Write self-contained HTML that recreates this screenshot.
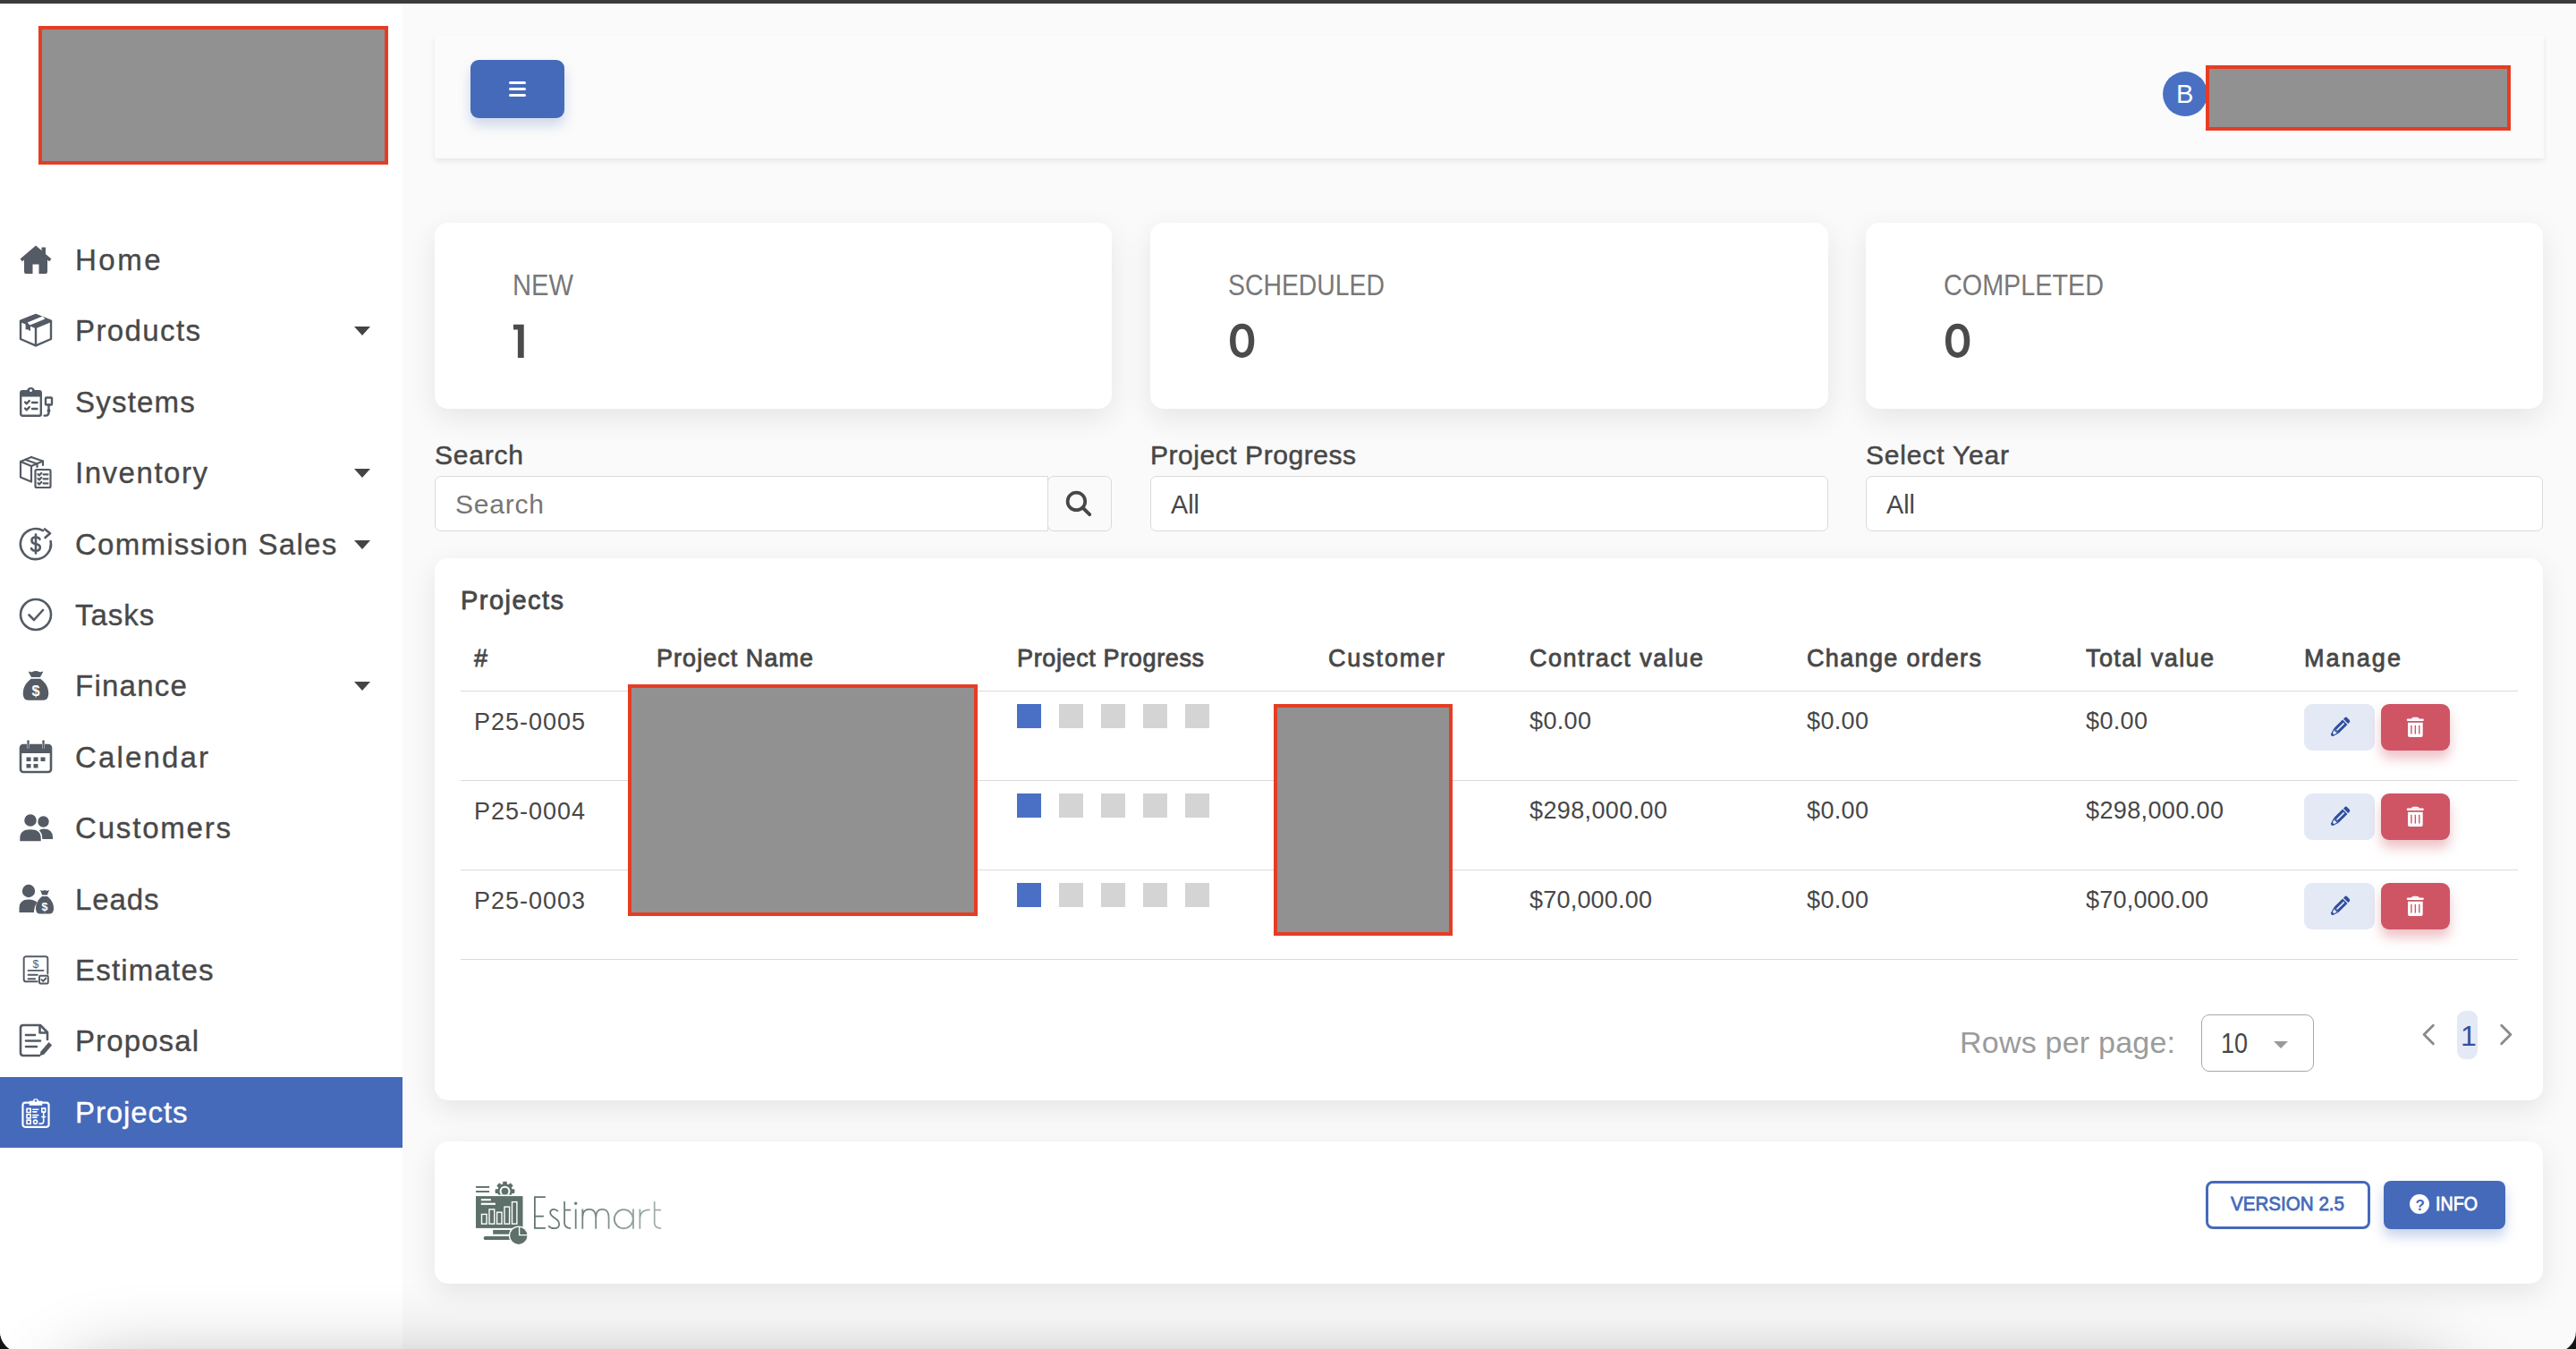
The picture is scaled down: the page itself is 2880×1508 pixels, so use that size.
<!DOCTYPE html>
<html lang="en">
<head>
<meta charset="utf-8">
<title>Projects</title>
<style>
*{box-sizing:border-box;margin:0;padding:0}
html,body{width:2880px;height:1508px;overflow:hidden;background:#161412}
body{font-family:"Liberation Sans",sans-serif;color:#474747;position:relative}
#win{position:absolute;left:0;top:0;width:2880px;height:1512px;background:#fafafa;border-radius:0 0 24px 24px;overflow:hidden}
#topbar{position:absolute;left:0;top:0;width:2880px;height:4px;background:#3b3b3b;z-index:50}
.abs{position:absolute}
.t{position:absolute;white-space:nowrap;line-height:1;transform-origin:left top}
.redact{position:absolute;background:#919191;border:4px solid #e53d24}
/* sidebar */
#side{position:absolute;left:0;top:0;width:450px;height:1512px;background:#fff;z-index:5}
.nav{position:absolute;left:0;width:450px;height:79px}
.nav .lbl{position:absolute;left:84px;top:21px;font-size:33px;line-height:38px;letter-spacing:1.1px;color:#484848;white-space:nowrap;-webkit-text-stroke:.35px currentColor}
.nav svg.ic{position:absolute;left:20px;top:19px;width:40px;height:40px}
.nav .caret{position:absolute;left:396px;top:35px;width:0;height:0;border-left:9px solid transparent;border-right:9px solid transparent;border-top:10px solid #444}
.nav.act{background:#466aba}
.nav.act .lbl{color:#fff}
.t.b{font-weight:700}
.t.sb{-webkit-text-stroke:.8px currentColor}
.t.m{-webkit-text-stroke:.5px currentColor}
.inp{background:#fff;border:1px solid #dadada}
/* cards */
.card{position:absolute;background:#fff;border-radius:15px;box-shadow:0 10px 32px rgba(0,0,0,.085)}
</style>
</head>
<body>
<div id="win">
<div id="topbar"></div>

<!-- SIDEBAR -->
<div id="side">
  <div class="redact" style="left:43px;top:29px;width:391px;height:155px"></div>
  <!--NAV-->
  <div class="nav" style="top:251.0px"><svg class="ic" viewBox="0 0 40 40"><path fill="#545b65" d="M20 4.5 L2.5 19.5 L5 22.3 L7 20.6 V34 Q7 36 9 36 H16.5 V25.5 H23.5 V36 H31 Q33 36 33 34 V20.6 L35 22.3 L37.5 19.5 L31 14 V6.5 H26.5 V10.1 Z"/></svg><div class="lbl" id="n0" style="letter-spacing:2.52px">Home</div></div>
  <div class="nav" style="top:330.4px"><svg class="ic" viewBox="0 0 40 40"><g fill="none" stroke="#545b65" stroke-width="2.4" stroke-linejoin="round" stroke-linecap="round"><path d="M20 3 L37 9.8 V30 L20 37.4 L3 30 V9.8 Z"/><path d="M20 17 V37"/></g><path fill="#545b65" stroke="#545b65" stroke-width="2.4" stroke-linejoin="round" d="M20 3 L37 9.8 L20 17 L3 9.8 Z"/><path fill="#fff" d="M10.6 11.4 L27.6 4.6 L30.4 7.6 L13.4 14.6 Z"/><path fill="#545b65" d="M8.6 12.4 L14 14.7 V21.2 L11.6 19.4 L8.6 19.2 Z"/></svg><div class="lbl" id="n1" style="letter-spacing:1.40px">Products</div><div class=caret></div></div>
  <div class="nav" style="top:409.8px"><svg class="ic" viewBox="0 0 40 40"><g fill="none" stroke="#545b65" stroke-width="2.4" stroke-linejoin="round" stroke-linecap="round"><rect x="3.2" y="8.2" width="22.6" height="27.6" rx="2"/><path d="M8 20.5 l1.8 1.8 l3-3.2"/><path d="M16 21 H21.5"/><path d="M8 27.5 l1.8 1.8 l3-3.2"/><path d="M16 28 H21.5"/><rect x="31" y="15.5" width="7" height="8" rx=".8"/><path d="M34.5 23.5 V32 Q34.5 35.6 31 35.6 H29.5"/></g><path fill="#545b65" d="M3.2 10 Q3.2 8.2 5.2 8.2 H10 Q10.6 4 14.5 4 Q18.4 4 19 8.2 H23.8 Q25.8 8.2 25.8 10 V14.6 H3.2 Z"/><circle cx="14.5" cy="7.4" r="1.5" fill="#fff"/><circle cx="34.5" cy="30" r="2" fill="#545b65"/></svg><div class="lbl" id="n2" style="letter-spacing:1.21px">Systems</div></div>
  <div class="nav" style="top:489.2px"><svg class="ic" viewBox="0 0 40 40"><g fill="none" stroke="#545b65" stroke-width="2.2" stroke-linejoin="round" stroke-linecap="round"><path d="M15 3 L28 7.5 V12"/><path d="M15 3 L3 8 V25.5 L15 30.5 V13 L3 8"/><path d="M15 13 L28 7.5"/><path d="M8 5.8 L21.5 10.5 V14"/><rect x="19.5" y="17" width="17" height="20" rx="1.5"/><path d="M22.5 22 l1.4 1.4 l2.4-2.6"/><path d="M28.5 22.3 H33.5"/><path d="M22.5 27 l1.4 1.4 l2.4-2.6"/><path d="M28.5 27.3 H33.5"/><path d="M22.5 32 l1.4 1.4 l2.4-2.6"/><path d="M28.5 32.3 H33.5"/></g></svg><div class="lbl" id="n3" style="letter-spacing:1.53px">Inventory</div><div class=caret></div></div>
  <div class="nav" style="top:568.6px"><svg class="ic" viewBox="0 0 40 40"><g fill="none" stroke="#545b65" stroke-width="2.6" stroke-linecap="round" stroke-linejoin="round"><path d="M36.6 17 A17 17 0 1 1 28 5.2"/><path d="M36.5 24 A17 17 0 0 0 37 21" /><path d="M30 3.5 L36 8.2 L30.5 13" /><path d="M24.5 14.8 Q23.5 12.5 20 12.5 Q15.5 12.5 15.5 16.2 Q15.5 19.3 20 20 Q24.8 20.8 24.8 24 Q24.8 27.7 20 27.7 Q16 27.7 15 25"/><path d="M20 9.5 V30.5"/></g></svg><div class="lbl" id="n4" style="letter-spacing:1.26px">Commission Sales</div><div class=caret></div></div>
  <div class="nav" style="top:648.0px"><svg class="ic" viewBox="0 0 40 40"><g fill="none" stroke="#545b65" stroke-width="2.6" stroke-linecap="round" stroke-linejoin="round"><circle cx="20" cy="20" r="17"/><path d="M12.5 20.5 L18 26 L28 15"/></g></svg><div class="lbl" id="n5" style="letter-spacing:0.96px">Tasks</div></div>
  <div class="nav" style="top:727.4px"><svg class="ic" viewBox="-1 -1.5 42 42"><path fill="#545b65" d="M13 3.5 Q14.5 4.6 16 3.8 Q18 2.6 20 2.6 Q22 2.6 24 3.8 Q25.5 4.6 27 3.5 Q28.6 2.6 28.2 4.6 L25.2 10 H14.8 L11.8 4.6 Q11.4 2.6 13 3.5 Z M14.5 11.8 H25.5 Q35 19 35 29 Q35 37 29 37 H11 Q5 37 5 29 Q5 19 14.5 11.8 Z"/><text x="20" y="32" font-family="Liberation Sans" font-weight="700" font-size="17" text-anchor="middle" fill="#fff">$</text></svg><div class="lbl" id="n6" style="letter-spacing:1.25px">Finance</div><div class=caret></div></div>
  <div class="nav" style="top:806.8px"><svg class="ic" viewBox="0 0 40 40"><g fill="none" stroke="#545b65" stroke-width="2.6" stroke-linejoin="round" stroke-linecap="round"><rect x="3" y="7" width="34" height="30" rx="3"/><path d="M11.5 3 V10"/><path d="M28.5 3 V10"/></g><path fill="#545b65" d="M3 9 Q3 7 6 7 H34 Q37 7 37 9 V16 H3 Z"/><path fill="#fff" d="M10 3 h3 v7.5 h-3z M27 3 h3 v7.5 h-3z"/><g fill="none" stroke="#545b65" stroke-width="2.2" stroke-linecap="round"><path d="M11.5 2.5 V10"/><path d="M28.5 2.5 V10"/></g><g fill="#545b65"><rect x="9.5" y="20.5" width="5" height="4.5"/><rect x="17.5" y="20.5" width="5" height="4.5"/><rect x="25.5" y="20.5" width="5" height="4.5"/><rect x="9.5" y="28" width="5" height="4.5"/><rect x="17.5" y="28" width="5" height="4.5"/></g></svg><div class="lbl" id="n7" style="letter-spacing:2.14px">Calendar</div></div>
  <div class="nav" style="top:886.2px"><svg class="ic" viewBox="0 0 40 40"><g fill="#545b65"><circle cx="28.5" cy="13.5" r="6.2"/><path d="M21 33 Q21 21.5 28.5 21.5 Q39 21.5 39 31 V33 Z"/><circle cx="14" cy="12" r="7.6" stroke="#fff" stroke-width="1.6"/><path d="M1.5 36 V32 Q1.5 21.5 14 21.5 Q26.5 21.5 26.5 32 V36 Z" stroke="#fff" stroke-width="1.6"/></g></svg><div class="lbl" id="n8" style="letter-spacing:1.82px">Customers</div></div>
  <div class="nav" style="top:965.6px"><svg class="ic" viewBox="0 0 40 40"><g fill="#545b65"><circle cx="12" cy="11" r="7.2"/><path d="M1.5 35 V30 Q1.5 20.5 12 20.5 Q19 20.5 21.5 24 Q18 28 18 35 Z"/><path d="M25 10 Q27.5 11.3 30 10 Q32.5 11.3 35 10 L32.8 15.5 H27.2 Z M27 17 H33 Q40 22.5 40 30.5 Q40 36.5 35 36.5 H25 Q20 36.5 20 30.5 Q20 22.5 27 17 Z"/></g><text x="30" y="32.6" font-family="Liberation Sans" font-weight="700" font-size="12.5" text-anchor="middle" fill="#fff">$</text></svg><div class="lbl" id="n9" style="letter-spacing:0.89px">Leads</div></div>
  <div class="nav" style="top:1045.0px"><svg class="ic" viewBox="-2.5 -2.5 45 45"><g fill="none" stroke="#545b65" stroke-width="2.2" stroke-linejoin="round" stroke-linecap="round"><path d="M22 35 H8 Q5 35 5 32 V6 Q5 3.5 8 3.5 H32 Q35 3.5 35 6 V25"/><path d="M10.5 21 H29.5"/><path d="M10.5 26.5 H22"/><path d="M10.5 31.5 H19"/><rect x="24.5" y="27.5" width="11" height="10" rx="1.5"/><path d="M27.3 32.5 l2 2 l3.4-3.8"/></g><text x="20" y="17.5" font-family="Liberation Sans" font-weight="400" font-size="14" text-anchor="middle" fill="#545b65">$</text></svg><div class="lbl" id="n10" style="letter-spacing:1.20px">Estimates</div></div>
  <div class="nav" style="top:1124.4px"><svg class="ic" viewBox="0 0 40 40"><g fill="none" stroke="#545b65" stroke-width="2.6" stroke-linejoin="round" stroke-linecap="round"><path d="M24 37 H6 Q3 37 3 34 V6 Q3 3 6 3 H25 L33 11 V19"/><path d="M24.5 3.5 V11.5 H32.5"/><path d="M9 14 H19"/><path d="M9 20.5 H25"/><path d="M9 27 H21"/></g><path fill="#545b65" d="M25.5 32.5 L34.5 22 L38.2 25.2 L29.2 35.8 L24.3 37.2 Z"/></svg><div class="lbl" id="n11" style="letter-spacing:1.11px">Proposal</div></div>
  <div class="nav act" style="top:1203.8px"><svg class="ic" viewBox="-2 -3 44 44"><g fill="none" stroke="#ffffff" stroke-width="2.4" stroke-linejoin="round" stroke-linecap="round"><rect x="4" y="7.5" width="32" height="30" rx="3"/></g><path fill="#ffffff" d="M12 5.5 H16.3 A3.8 3.8 0 0 1 23.7 5.5 H28 V11 H12 Z"/><circle cx="20" cy="5.2" r="1.3" fill="#466aba"/><g fill="none" stroke="#ffffff" stroke-width="1.8" stroke-linecap="round" stroke-linejoin="round"><rect x="9" y="15" width="4.6" height="4.6"/><path d="M16.5 16 H23"/><path d="M16.5 18.8 H21"/><rect x="9" y="22" width="4.6" height="4.6"/><path d="M16.5 23 H23"/><path d="M16.5 25.8 H21"/><rect x="9" y="29" width="4.6" height="4.6"/><circle cx="19.5" cy="31.3" r="2.2"/><rect x="27.5" y="14.5" width="4.2" height="4.6"/><path d="M29.6 19 V30.5 Q29.6 33.5 26 33.5 H24.5"/><path d="M27.5 25 h4.2"/></g></svg><div class="lbl" id="n12" style="letter-spacing:0.91px">Projects</div></div>
  <!--/NAV-->
</div>

<!-- HEADER -->
<div class="abs" id="hdr" style="left:486px;top:40px;width:2358px;height:137px;background:#fbfbfb;box-shadow:0 3px 6px rgba(0,0,0,.08)">
  <div class="abs" style="left:40px;top:27px;width:105px;height:65px;border-radius:9px;background:#466aba;box-shadow:0 8px 14px rgba(70,106,186,.25)">
    <div class="abs" style="left:43px;top:24px;width:19px;height:3px;border-radius:2px;background:#fff"></div>
    <div class="abs" style="left:43px;top:31px;width:19px;height:3px;border-radius:2px;background:#fff"></div>
    <div class="abs" style="left:43px;top:38px;width:19px;height:3px;border-radius:2px;background:#fff"></div>
  </div>
  <div class="abs" style="left:1932px;top:40px;width:50px;height:50px;border-radius:50%;background:#4a70c4"></div>
  <div class="t" style="left:1947px;top:51px;font-size:29px;color:#fff">B</div>
  <div class="redact" style="left:1980px;top:33px;width:341px;height:73px"></div>
</div>

<!-- STAT CARDS -->
<div class="card" style="left:486px;top:249px;width:757px;height:208px"></div>
<div class="card" style="left:1286px;top:249px;width:758px;height:208px"></div>
<div class="card" style="left:2086px;top:249px;width:757px;height:208px"></div>

<svg class="abs" style="left:570px;top:358px;width:24px;height:46px" viewBox="0 0 24 46"><path fill="#4b4b4b" d="M4 4.8 H15.7 V41.9 H8.9 V10.6 H4 Z"/></svg>
<svg class="abs" style="left:1373.2px;top:358px;width:34px;height:46px" viewBox="0 0 34 46"><path fill="#4b4b4b" fill-rule="evenodd" d="M15.65 3.8 C24 3.8 29.3 10.5 29.3 22.85 C29.3 35.2 24 41.9 15.65 41.9 C7.3 41.9 2 35.2 2 22.85 C2 10.5 7.3 3.8 15.65 3.8 Z M15.65 9.7 C11 9.7 8.5 14.2 8.5 22.85 C8.5 31.5 11 36 15.65 36 C20.3 36 22.8 31.5 22.8 22.85 C22.8 14.2 20.3 9.7 15.65 9.7 Z"/></svg>
<svg class="abs" style="left:2173.2px;top:358px;width:34px;height:46px" viewBox="0 0 34 46"><path fill="#4b4b4b" fill-rule="evenodd" d="M15.65 3.8 C24 3.8 29.3 10.5 29.3 22.85 C29.3 35.2 24 41.9 15.65 41.9 C7.3 41.9 2 35.2 2 22.85 C2 10.5 7.3 3.8 15.65 3.8 Z M15.65 9.7 C11 9.7 8.5 14.2 8.5 22.85 C8.5 31.5 11 36 15.65 36 C20.3 36 22.8 31.5 22.8 22.85 C22.8 14.2 20.3 9.7 15.65 9.7 Z"/></svg>
<div class="t" id="s1l" style="left:573px;font-size:33px;color:#787878;transform:scaleX(0.8831);top:302.1px">NEW</div>
<div class="t" id="s2l" style="left:1373px;font-size:33px;color:#787878;transform:scaleX(0.8598);top:302.1px">SCHEDULED</div>
<div class="t" id="s3l" style="left:2173px;font-size:33px;color:#787878;transform:scaleX(0.8716);top:302.1px">COMPLETED</div>



<div class="t m" id="f1l" style="left:486px;font-size:30px;letter-spacing:0.79px;top:493.6px">Search</div>
<div class="t m" id="f2l" style="left:1286px;font-size:30px;letter-spacing:0.55px;top:493.6px">Project Progress</div>
<div class="t m" id="f3l" style="left:2086px;font-size:30px;letter-spacing:0.82px;top:493.6px">Select Year</div>
<div class="abs inp" style="left:486px;top:532px;width:686px;height:62px;border-radius:7px 0 0 7px"></div>
<div class="abs inp" style="left:1171px;top:532px;width:72px;height:62px;border-radius:7px;background:#fafafa"></div>
<svg class="abs" style="left:1188px;top:545px;width:36px;height:36px" viewBox="0 0 36 36"><circle cx="15.4" cy="15.4" r="9.8" fill="none" stroke="#474747" stroke-width="3.7"/><path d="M22.6 22.6 L30.2 30.2" stroke="#474747" stroke-width="4" stroke-linecap="round"/></svg>
<div class="abs inp" style="left:1286px;top:532px;width:758px;height:62px;border-radius:7px"></div>
<div class="abs inp" style="left:2086px;top:532px;width:757px;height:62px;border-radius:7px"></div>
<div class="t" id="f1p" style="left:509px;font-size:30px;color:#767676;letter-spacing:0.79px;top:548.6px">Search</div>
<div class="t" id="f2v" style="left:1309px;font-size:30px;transform:scaleX(0.9597);top:548.6px">All</div>
<div class="t" id="f3v" style="left:2109px;font-size:30px;transform:scaleX(0.9597);top:548.6px">All</div>


<div class="card" style="left:486px;top:624px;width:2357px;height:606px"></div>
<div class="t sb" id="pt" style="left:515px;font-size:29px;letter-spacing:1.46px;top:656.5px">Projects</div>
<div class="t sb" id="h0" style="left:530px;font-size:27px;top:723.1px">#</div>
<div class="t sb" id="h1" style="left:734px;font-size:27px;letter-spacing:1.04px;top:723.1px">Project Name</div>
<div class="t sb" id="h2" style="left:1137px;font-size:27px;letter-spacing:0.63px;top:723.1px">Project Progress</div>
<div class="t sb" id="h3" style="left:1485px;font-size:27px;letter-spacing:1.85px;top:723.1px">Customer</div>
<div class="t sb" id="h4" style="left:1710px;font-size:27px;letter-spacing:1.53px;top:723.1px">Contract value</div>
<div class="t sb" id="h5" style="left:2020px;font-size:27px;letter-spacing:1.36px;top:723.1px">Change orders</div>
<div class="t sb" id="h6" style="left:2332px;font-size:27px;letter-spacing:1.39px;top:723.1px">Total value</div>
<div class="t sb" id="h7" style="left:2576px;font-size:27px;letter-spacing:2.08px;top:723.1px">Manage</div>
<div class="abs" style="left:515px;top:772px;width:2300px;height:1px;background:#dadada"></div>
<div class="abs" style="left:515px;top:872px;width:2300px;height:1px;background:#dadada"></div>
<div class="abs" style="left:515px;top:972px;width:2300px;height:1px;background:#dadada"></div>
<div class="abs" style="left:515px;top:1072px;width:2300px;height:1px;background:#dadada"></div>
<div class="t" id="r0a" style="left:530px;font-size:27px;letter-spacing:0.98px;top:794.1px">P25-0005</div>
<div class="t" id="r0b" style="left:1710px;font-size:27px;letter-spacing:0.36px;top:793.1px">$0.00</div>
<div class="t" id="r0c" style="left:2020px;font-size:27px;letter-spacing:0.36px;top:793.1px">$0.00</div>
<div class="t" id="r0d" style="left:2332px;font-size:27px;letter-spacing:0.36px;top:793.1px">$0.00</div>
<div class="abs" style="left:1137.0px;top:787px;width:27px;height:27px;background:#4a70c6"></div>
<div class="abs" style="left:1184.1px;top:787px;width:27px;height:27px;background:#d4d4d4"></div>
<div class="abs" style="left:1231.2px;top:787px;width:27px;height:27px;background:#d4d4d4"></div>
<div class="abs" style="left:1278.3px;top:787px;width:27px;height:27px;background:#d4d4d4"></div>
<div class="abs" style="left:1325.4px;top:787px;width:27px;height:27px;background:#d4d4d4"></div>
<div class="abs" style="left:2576px;top:787px;width:79px;height:52px;border-radius:9px;background:#e4e9f6"></div>
<svg class="abs" style="left:2599.5px;top:796.8px;width:32px;height:32px" viewBox="-16 -16 32 32"><g transform="rotate(45)" fill="#2e4f9e"><path d="M-3.8 -9.3 V-11.2 Q-3.8 -13.4 -1.6 -13.4 H1.6 Q3.8 -13.4 3.8 -11.2 V-9.3 Z"/><rect x="-3.8" y="-8.1" width="7.6" height="13.8"/><path d="M-3.8 5.7 H3.8 L1.7 12.6 Q0 14.4 -1.7 12.6 Z"/><rect x="-.85" y="-6.6" width="1.7" height="11.4" fill="#e4e9f6"/><path d="M-2.2 6.9 H2.2 L1.1 10.4 H-1.1 Z" fill="#e4e9f6"/></g></svg>
<div class="abs" style="left:2662px;top:787px;width:77px;height:52px;border-radius:9px;background:#cf5565;box-shadow:0 9px 13px rgba(207,85,101,.36)"></div>
<svg class="abs" style="left:2689px;top:800px;width:24px;height:26px" viewBox="0 0 24 26"><g fill="#fff"><path d="M6.6 3.7 Q7.4 1.7 9.6 1.7 H13.1 Q15.3 1.7 16.1 3.7 Z"/><rect x="1.8" y="3.4" width="19" height="2.6" rx="1.2"/><path d="M3 7.8 H19.7 V21.4 Q19.7 24 17.1 24 H5.6 Q3 24 3 21.4 Z"/></g><g stroke="#cf5565" stroke-width="1.4" stroke-linecap="butt"><path d="M6.9 10.8 V20.6"/><path d="M11.35 10.8 V20.6"/><path d="M15.8 10.8 V20.6"/></g></svg>
<div class="t" id="r1a" style="left:530px;font-size:27px;letter-spacing:0.98px;top:894.1px">P25-0004</div>
<div class="t" id="r1b" style="left:1710px;font-size:27px;letter-spacing:0.38px;top:893.1px">$298,000.00</div>
<div class="t" id="r1c" style="left:2020px;font-size:27px;letter-spacing:0.36px;top:893.1px">$0.00</div>
<div class="t" id="r1d" style="left:2332px;font-size:27px;letter-spacing:0.38px;top:893.1px">$298,000.00</div>
<div class="abs" style="left:1137.0px;top:887px;width:27px;height:27px;background:#4a70c6"></div>
<div class="abs" style="left:1184.1px;top:887px;width:27px;height:27px;background:#d4d4d4"></div>
<div class="abs" style="left:1231.2px;top:887px;width:27px;height:27px;background:#d4d4d4"></div>
<div class="abs" style="left:1278.3px;top:887px;width:27px;height:27px;background:#d4d4d4"></div>
<div class="abs" style="left:1325.4px;top:887px;width:27px;height:27px;background:#d4d4d4"></div>
<div class="abs" style="left:2576px;top:887px;width:79px;height:52px;border-radius:9px;background:#e4e9f6"></div>
<svg class="abs" style="left:2599.5px;top:896.8px;width:32px;height:32px" viewBox="-16 -16 32 32"><g transform="rotate(45)" fill="#2e4f9e"><path d="M-3.8 -9.3 V-11.2 Q-3.8 -13.4 -1.6 -13.4 H1.6 Q3.8 -13.4 3.8 -11.2 V-9.3 Z"/><rect x="-3.8" y="-8.1" width="7.6" height="13.8"/><path d="M-3.8 5.7 H3.8 L1.7 12.6 Q0 14.4 -1.7 12.6 Z"/><rect x="-.85" y="-6.6" width="1.7" height="11.4" fill="#e4e9f6"/><path d="M-2.2 6.9 H2.2 L1.1 10.4 H-1.1 Z" fill="#e4e9f6"/></g></svg>
<div class="abs" style="left:2662px;top:887px;width:77px;height:52px;border-radius:9px;background:#cf5565;box-shadow:0 9px 13px rgba(207,85,101,.36)"></div>
<svg class="abs" style="left:2689px;top:900px;width:24px;height:26px" viewBox="0 0 24 26"><g fill="#fff"><path d="M6.6 3.7 Q7.4 1.7 9.6 1.7 H13.1 Q15.3 1.7 16.1 3.7 Z"/><rect x="1.8" y="3.4" width="19" height="2.6" rx="1.2"/><path d="M3 7.8 H19.7 V21.4 Q19.7 24 17.1 24 H5.6 Q3 24 3 21.4 Z"/></g><g stroke="#cf5565" stroke-width="1.4" stroke-linecap="butt"><path d="M6.9 10.8 V20.6"/><path d="M11.35 10.8 V20.6"/><path d="M15.8 10.8 V20.6"/></g></svg>
<div class="t" id="r2a" style="left:530px;font-size:27px;letter-spacing:0.98px;top:994.1px">P25-0003</div>
<div class="t" id="r2b" style="left:1710px;font-size:27px;letter-spacing:0.21px;top:993.1px">$70,000.00</div>
<div class="t" id="r2c" style="left:2020px;font-size:27px;letter-spacing:0.36px;top:993.1px">$0.00</div>
<div class="t" id="r2d" style="left:2332px;font-size:27px;letter-spacing:0.21px;top:993.1px">$70,000.00</div>
<div class="abs" style="left:1137.0px;top:987px;width:27px;height:27px;background:#4a70c6"></div>
<div class="abs" style="left:1184.1px;top:987px;width:27px;height:27px;background:#d4d4d4"></div>
<div class="abs" style="left:1231.2px;top:987px;width:27px;height:27px;background:#d4d4d4"></div>
<div class="abs" style="left:1278.3px;top:987px;width:27px;height:27px;background:#d4d4d4"></div>
<div class="abs" style="left:1325.4px;top:987px;width:27px;height:27px;background:#d4d4d4"></div>
<div class="abs" style="left:2576px;top:987px;width:79px;height:52px;border-radius:9px;background:#e4e9f6"></div>
<svg class="abs" style="left:2599.5px;top:996.8px;width:32px;height:32px" viewBox="-16 -16 32 32"><g transform="rotate(45)" fill="#2e4f9e"><path d="M-3.8 -9.3 V-11.2 Q-3.8 -13.4 -1.6 -13.4 H1.6 Q3.8 -13.4 3.8 -11.2 V-9.3 Z"/><rect x="-3.8" y="-8.1" width="7.6" height="13.8"/><path d="M-3.8 5.7 H3.8 L1.7 12.6 Q0 14.4 -1.7 12.6 Z"/><rect x="-.85" y="-6.6" width="1.7" height="11.4" fill="#e4e9f6"/><path d="M-2.2 6.9 H2.2 L1.1 10.4 H-1.1 Z" fill="#e4e9f6"/></g></svg>
<div class="abs" style="left:2662px;top:987px;width:77px;height:52px;border-radius:9px;background:#cf5565;box-shadow:0 9px 13px rgba(207,85,101,.36)"></div>
<svg class="abs" style="left:2689px;top:1000px;width:24px;height:26px" viewBox="0 0 24 26"><g fill="#fff"><path d="M6.6 3.7 Q7.4 1.7 9.6 1.7 H13.1 Q15.3 1.7 16.1 3.7 Z"/><rect x="1.8" y="3.4" width="19" height="2.6" rx="1.2"/><path d="M3 7.8 H19.7 V21.4 Q19.7 24 17.1 24 H5.6 Q3 24 3 21.4 Z"/></g><g stroke="#cf5565" stroke-width="1.4" stroke-linecap="butt"><path d="M6.9 10.8 V20.6"/><path d="M11.35 10.8 V20.6"/><path d="M15.8 10.8 V20.6"/></g></svg>
<div class="redact" style="left:702px;top:765px;width:391px;height:259px"></div>
<div class="redact" style="left:1424px;top:787px;width:200px;height:259px"></div>
<div class="t" id="pg" style="left:2191px;font-size:34px;color:#9b9b9b;letter-spacing:0.22px;top:1148.2px">Rows per page:</div>
<div class="abs" style="left:2461px;top:1134px;width:126px;height:64px;border:1px solid #a8a8a8;border-radius:9px;background:#fff"></div>
<div class="t" id="pgv" style="left:2483px;font-size:31px;transform:scaleX(0.8700);top:1150.8px">10</div>
<div class="abs" style="left:2542px;top:1164px;width:0;height:0;border-left:8px solid transparent;border-right:8px solid transparent;border-top:8px solid #9a9a9a"></div>
<svg class="abs" style="left:2707px;top:1144px;width:16px;height:25px" viewBox="0 0 18 28"><path d="M15 2.5 L3.5 14 L15 25.5" fill="none" stroke="#8a8a8a" stroke-width="3.2" stroke-linecap="round" stroke-linejoin="round"/></svg>
<div class="abs" style="left:2747px;top:1130px;width:23px;height:54px;border-radius:9px;background:#e4e9f6"></div>
<div class="t" id="pg1" style="left:2751px;font-size:32px;color:#34519f;top:1141.9px">1</div>
<svg class="abs" style="left:2794px;top:1144px;width:16px;height:25px" viewBox="0 0 18 28"><path d="M3 2.5 L14.5 14 L3 25.5" fill="none" stroke="#8a8a8a" stroke-width="3.2" stroke-linecap="round" stroke-linejoin="round"/></svg>


<div class="card" style="left:486px;top:1276px;width:2357px;height:159px"></div>
<svg class="abs" style="left:520px;top:1310px;width:240px;height:90px" viewBox="0 0 240 90">
<defs><clipPath id="gc"><rect x="30" y="8" width="30" height="17.4"/></clipPath>
<linearGradient id="lg" gradientUnits="userSpaceOnUse" x1="0" x2="150" y1="0" y2="0"><stop offset="0" stop-color="#5d706a"/><stop offset=".45" stop-color="#72857e"/><stop offset="1" stop-color="#a5b4ae"/></linearGradient></defs>
<g fill="#5d706a">
<rect x="12" y="16" width="15.1" height="1.9"/><rect x="12" y="21.1" width="15.1" height="1.9"/>
<g clip-path="url(#gc)"><g transform="translate(44.5 21.6)"><circle r="8.4"/><rect x="-2.3" y="-10.9" width="4.6" height="4" rx=".8" transform="rotate(0)"/><rect x="-2.3" y="-10.9" width="4.6" height="4" rx=".8" transform="rotate(45)"/><rect x="-2.3" y="-10.9" width="4.6" height="4" rx=".8" transform="rotate(90)"/><rect x="-2.3" y="-10.9" width="4.6" height="4" rx=".8" transform="rotate(135)"/><rect x="-2.3" y="-10.9" width="4.6" height="4" rx=".8" transform="rotate(180)"/><rect x="-2.3" y="-10.9" width="4.6" height="4" rx=".8" transform="rotate(225)"/><rect x="-2.3" y="-10.9" width="4.6" height="4" rx=".8" transform="rotate(270)"/><rect x="-2.3" y="-10.9" width="4.6" height="4" rx=".8" transform="rotate(315)"/><circle r="5.9" fill="#fff"/><circle r="3.9"/></g></g>
<rect x="12" y="27.1" width="52.5" height="35.8"/>
<rect x="31.2" y="64.9" width="19.4" height="4.8"/><rect x="20.8" y="72" width="29.8" height="4" rx="1.6"/>
</g>
<rect x="17.8" y="30.2" width="11.1" height="2" fill="#fff"/><rect x="17.8" y="34.7" width="16.1" height="2.2" fill="#fff"/>
<rect x="18.5" y="47.4" width="5.6" height="10.7" fill="none" stroke="#fff" stroke-width="1.4"/><rect x="27.0" y="41.9" width="5.7" height="16.2" fill="none" stroke="#fff" stroke-width="1.4"/><rect x="35.6" y="45.2" width="5.4" height="12.9" fill="none" stroke="#fff" stroke-width="1.4"/><rect x="44.0" y="39.1" width="5.6" height="19.0" fill="none" stroke="#fff" stroke-width="1.4"/><rect x="52.5" y="33.6" width="5.4" height="24.5" fill="none" stroke="#fff" stroke-width="1.4"/>
<circle cx="59.8" cy="71.3" r="10.9" fill="#fff"/><circle cx="59.8" cy="71.3" r="9.6" fill="#5d706a"/>
<path d="M60.6 61 V70.6 H70" fill="none" stroke="#fff" stroke-width="1.4"/>
<g transform="translate(70 20)" fill="none" stroke="url(#lg)" stroke-width="1.75" stroke-linecap="butt" stroke-linejoin="miter">
<path d="M19.9 8.2 H7.9 V42.9 H19.9 M7.9 29.5 H17.9"/>
<path d="M33.8 24.2 Q32 21.8 29.3 21.8 Q25.3 21.8 25.2 25.6 Q25.2 28.5 30 31.5 Q35.2 34.6 35.2 38.5 Q35 43.2 29.5 43.2 Q25.5 43.2 23.2 40.2"/>
<path d="M41.1 12.9 V37 Q41.1 43 48.2 43 M41.1 22.5 H48.2"/>
<path d="M53.7 21.6 V43.7"/><circle cx="53.7" cy="15.2" r=".9" fill="#5d706a"/>
<path d="M61.3 21.6 V43.7 M61.3 31 Q61.3 21.9 68.7 21.9 Q76.2 21.9 76.2 31 V43.7 M76.2 31 Q76.2 21.9 83.4 21.9 Q90.6 21.9 90.6 31 V43.7"/>
<circle cx="107.3" cy="32.7" r="10.5"/><path d="M118 21.6 V43.7"/>
<path d="M125.4 21.6 V43.7 M125.4 33 Q125.4 22.2 136.8 22.3"/>
<path d="M141.7 12.9 V37 Q141.7 43 149.1 43 M141.7 22.5 H149.1"/>
</g>
</svg>
<div class="abs" style="left:2466px;top:1320px;width:184px;height:54px;border:3px solid #466aba;border-radius:8px;background:#fff"></div>
<div class="t sb" id="ver" style="left:2494px;font-size:22px;color:#466aba;transform:scaleX(0.9358);top:1335.4px">VERSION 2.5</div>
<div class="abs" style="left:2665px;top:1320px;width:136px;height:54px;border-radius:8px;background:#466aba;box-shadow:0 8px 14px rgba(70,106,186,.3)"></div>
<div class="abs" style="left:2694px;top:1335px;width:22px;height:22px;border-radius:50%;background:#fff"></div>
<div class="t b" id="infoq" style="left:2700.5px;font-size:17px;color:#466aba;top:1338.6px">?</div>
<div class="t sb" id="info" style="left:2723px;font-size:22px;color:#fff;transform:scaleX(0.8942);top:1335.4px">INFO</div>


<div class="abs" style="left:95px;top:1560px;width:2620px;height:60px;border-radius:30px;box-shadow:0 0 90px 30px rgba(0,0,0,.32);z-index:20"></div>
</div>
</body>
</html>
